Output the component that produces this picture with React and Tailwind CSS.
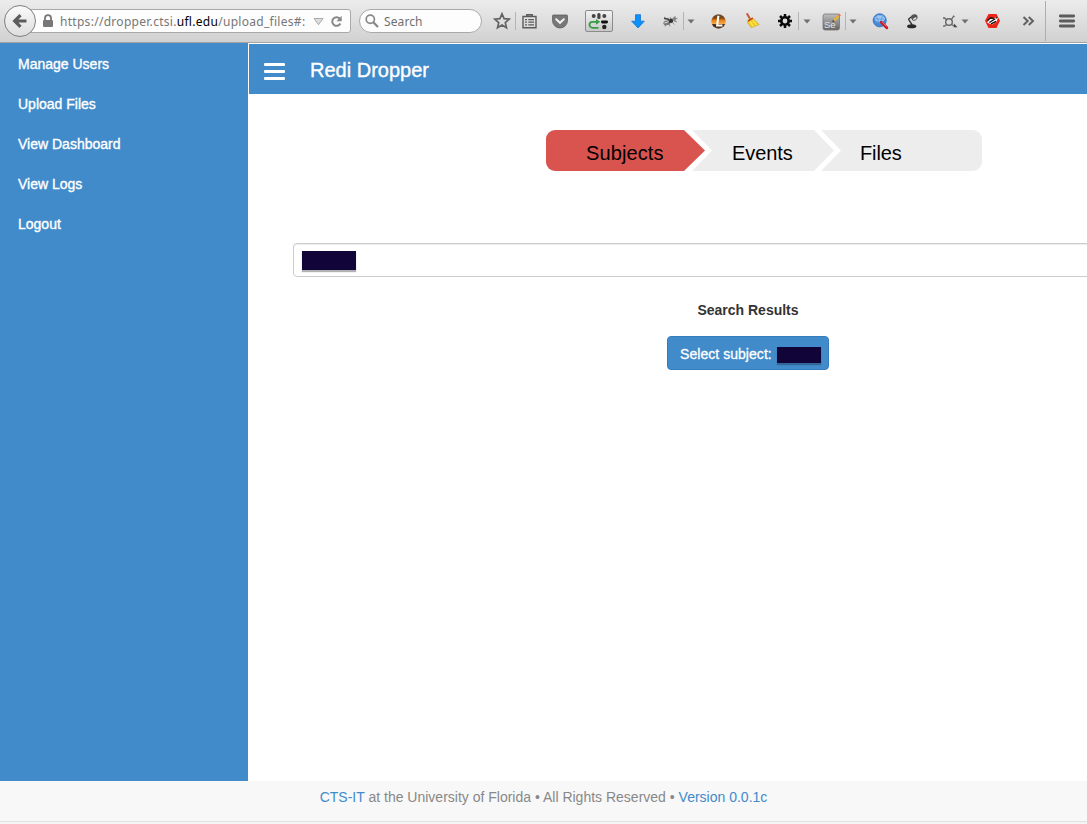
import React from "react";

const Sep = ({ className }) => <span className={`h-[18px] w-px shrink-0 bg-[#b4b4b4] ${className}`} />;

const Caret = ({ className }) => (
  <svg className={`h-[5px] w-2 shrink-0 ${className}`} viewBox="0 0 8 5">
    <path d="M0.5 .5h7L4 4.5z" fill="#707070" />
  </svg>
);

const Icon = ({ w = 16, h = 16, className = "", children }) => (
  <svg width={w} height={h} viewBox={`0 0 ${w} ${h}`} className={`shrink-0 ${className}`} fill="none">
    {children}
  </svg>
);

function AddressBar() {
  return (
    <div className="flex h-full shrink-0 items-center">
      <div className="z-10 ml-1 flex h-8 w-8 shrink-0 items-center justify-center rounded-full border border-[#808080] bg-linear-to-b from-[#fafafa] to-[#dedede]">
        <Icon w={16} h={16}>
          <path d="M8.5 2.2L2.7 8l5.8 5.8M3.5 8h11" stroke="#5c5c5c" strokeWidth="3.2" />
        </Icon>
      </div>
      <div className="-ml-2 flex h-6 w-[323px] shrink-0 items-center rounded-r-[3px] border border-[#a9a9a9] bg-[#fdfdfd]">
        <Icon w={12} h={14} className="ml-[13px]">
          <path d="M3 6.5V4.2a3 3 0 016 0v2.3" stroke="#777" strokeWidth="1.8" />
          <rect x="1" y="6" width="10" height="7" rx="1" fill="#777" />
        </Icon>
        <div className="ml-[6px] w-[246px] shrink-0 overflow-hidden whitespace-nowrap pt-0.5 font-['Noto_Sans',sans-serif] text-[12px] tracking-[0.29px] text-[#777]">
          https://dropper.ctsi.<span className="text-black">ufl.edu</span>/upload_files#:
        </div>
        <Icon w={11} h={9} className="ml-[7px]">
          <path d="M1 1.5h9L5.5 7.7z" fill="#ddd" stroke="#aaa" />
        </Icon>
        <Icon w={13} h={13} className="ml-[6px]">
          <path d="M9.8 3.7A4.3 4.3 0 1010.4 8.5" stroke="#888" strokeWidth="2" />
          <path d="M11.7 .8v5.4H6.4z" fill="#888" />
        </Icon>
      </div>
      <div className="ml-2 flex h-6 w-[123px] shrink-0 items-center rounded-full border border-[#a9a9a9] bg-[#fdfdfd]">
        <Icon w={14} h={14} className="ml-[5px]">
          <circle cx="5.3" cy="5.3" r="4.1" stroke="#888" strokeWidth="1.7" />
          <path d="M8.3 8.3l4.7 4.7" stroke="#888" strokeWidth="2.3" />
        </Icon>
        <span className="ml-[5px] pt-0.5 font-['Noto_Sans',sans-serif] text-[12px] tracking-[0.1px] text-[#707070]">Search</span>
      </div>
    </div>
  );
}

function Toolbar() {
  return (
    <div className="flex h-[43px] shrink-0 items-center overflow-hidden border-b border-[#a3a3a3] bg-linear-to-b from-[#ececec] to-[#d1d1d1]">
      <AddressBar />
      <Icon w={18} h={18} className="ml-[11px]">
        <path d="M9 1.8l2.1 4.8 5.2.5-4 3.5 1.2 5.2L9 13.1l-4.5 2.7 1.2-5.2-4-3.5 5.2-.5z" stroke="#636363" strokeWidth="1.7" />
      </Icon>
      <Sep className="ml-[4px]" />
      <Icon w={15} h={16} className="ml-[6px]">
        <path d="M1 3.5h13v11.2H1zM4.8 3V1.7h5.4V3" stroke="#5b5b5b" strokeWidth="1.4" />
        <path d="M3 6.7h2m1.3 0H12M3 9.2h2m1.3 0H12M3 11.8h2m1.3 0H12" stroke="#5b5b5b" strokeWidth="1.3" />
      </Icon>
      <Icon w={16} h={15} className="ml-[15px]">
        <path d="M1.5 1h13q1 0 1 1v4.5a7.5 7.5 0 01-15 0V2q0-1 1-1z" fill="#777" stroke="#555" strokeWidth=".7" />
        <path d="M4.2 5.2L8 8.8l3.8-3.6" stroke="#f2f2f2" strokeWidth="2" strokeLinecap="round" />
      </Icon>
      <div className="ml-[17px] flex h-[22px] w-7 shrink-0 items-center justify-center rounded-[2px] border border-[#8b8b8b] bg-linear-to-b from-[#f2f2f2] to-[#c8c8c8]">
        <Icon w={24} h={18}>
          <circle cx="6.7" cy="4" r="2" fill="#444" />
          <rect x="10.3" y="1" width="3.2" height="6" rx="1.5" fill="#444" />
          <circle cx="17.3" cy="4" r="2" fill="#444" />
          <path d="M11.5 15.8H5.5a3 3 0 010-6h4.5" stroke="#3a9a45" strokeWidth="1.8" />
          <path d="M9 6.9l4.2 2.9L9 12.7z" fill="#3a9a45" />
          <rect x="14" y="8.4" width="7" height="3" rx="1.4" fill="#111" />
          <circle cx="17.3" cy="15" r="2.2" fill="#222" />
        </Icon>
      </div>
      <Icon w={14} h={15} className="ml-[18px]">
        <path d="M4.5 .7h5v6.5h3.8L7 14 .7 7.2h3.8z" fill="#0a91ff" stroke="#1673cf" strokeWidth=".8" />
      </Icon>
      <Icon w={16} h={14} className="ml-[17px]">
        <ellipse cx="5" cy="8.8" rx="3.7" ry="2.4" fill="#777" transform="rotate(-15 5 8.8)" />
        <circle cx="9" cy="6.7" r="2.3" fill="#333" />
        <circle cx="12.3" cy="5" r="1.9" fill="#888" />
        <path d="M2 3l3 2 3 1M4 10l-1 2.5M7 9l1 3.5M10 8l2.5 2.5M12.5 4l.7-2M13.5 5l2-.8M9 5L8 3M12 7l3 1" stroke="#777" strokeWidth=".8" />
        <path d="M2 4.5l4 .5 1.5 1.5" stroke="#444" strokeWidth="1.4" />
        <path d="M2.5 9l4-1.3" stroke="#eee" strokeWidth=".9" />
      </Icon>
      <Sep className="ml-[5px]" />
      <Caret className="ml-[3px]" />
      <Icon w={15} h={15} className="ml-[16px]">
        <defs>
          <linearGradient id="orb" x1="0" y1="0" x2="0" y2="1">
            <stop stopColor="#6a5648" /><stop offset=".25" stopColor="#7a4411" /><stop offset=".42" stopColor="#e5811c" /><stop offset=".64" stopColor="#f4a748" /><stop offset=".72" stopColor="#40200b" /><stop offset="1" stopColor="#5d4330" />
          </linearGradient>
        </defs>
        <circle cx="7.5" cy="7.5" r="7.2" fill="url(#orb)" />
        <path d="M7.4 1.8L6.1 11.5h5.4" stroke="#fff" strokeWidth="2" />
      </Icon>
      <Icon w={16} h={16} className="ml-[19px]">
        <path d="M2.2 1l3.2 5.5" stroke="#c75b35" strokeWidth="2" strokeLinecap="round" />
        <path d="M2.3 9.2Q3 5.7 7.4 5l6.8 6.6-8 3z" fill="#f4cf21" stroke="#d0a215" strokeWidth=".7" />
        <path d="M3 8.2l4.8-3" stroke="#bd3a22" strokeWidth="1.5" />
        <path d="M5 8.5l3.2 5M8 7.2l4 5.1" stroke="#fff17a" strokeWidth=".9" />
      </Icon>
      <Icon w={14} h={14} className="ml-[17px]">
        <circle cx="7" cy="7" r="3.7" stroke="#0b0b0b" strokeWidth="2.6" />
        <path d="M7 0v3M7 11v3M0 7h3M11 7h3M2 2l2.2 2.2M9.8 9.8L12 12M2 12l2.2-2.2M9.8 4.2L12 2" stroke="#0b0b0b" strokeWidth="2.5" />
      </Icon>
      <Sep className="ml-[6px]" />
      <Caret className="ml-[4px]" />
      <Icon w={20} h={19} className="ml-[11px]">
        <defs>
          <linearGradient id="seBox" x1="0" y1="0" x2="0" y2="1"><stop stopColor="#bfbfbf" /><stop offset="1" stopColor="#646464" /></linearGradient>
        </defs>
        <rect x="1" y="2" width="16.5" height="16" rx="2" fill="url(#seBox)" stroke="#777" strokeWidth=".8" />
        <text x="2" y="16" fill="#e4e4e4" fontSize="9.5" fontFamily="Liberation Sans">Se</text>
        <path d="M12 8.5l4.5-4.7" stroke="#e2b23c" strokeWidth="2.8" />
        <path d="M16.5 3.8l1.5-1.5" stroke="#d07a65" strokeWidth="2.8" />
        <path d="M10.3 10.3l.6-2.5 1.9 1.7z" fill="#444" />
      </Icon>
      <Sep className="ml-[3px]" />
      <Caret className="ml-[3px]" />
      <Icon w={17} h={17} className="ml-[15px]">
        <circle cx="7.7" cy="7.3" r="6.6" fill="#4688d8" stroke="#3972be" strokeWidth=".8" />
        <path d="M2.5 4.7l3.2-2.5 5 .4 2.5 3-2 3-4.5.5-3.5-1.4z" fill="#9dc8f2" />
        <path d="M3 6h9M4.5 3.5l3 7M10.5 3l-3 8M3 9.3h8" stroke="#5b99dc" strokeWidth=".8" />
        <path d="M9.3 9.3l5.5 5.5" stroke="#c91927" strokeWidth="2.9" strokeLinecap="round" />
        <path d="M9.8 8.8l4.8 4.8" stroke="#f3766e" strokeWidth=".8" />
      </Icon>
      <Icon w={14} h={16} className="ml-[17px]">
        <path d="M2.4 6.2L7 2.5M2.4 6.2l3.8 5.8" stroke="#383838" strokeWidth="1.4" />
        <path d="M5 3.4Q6.4.6 9.3 1.3q2.8.7 2 3.5L7.2 7.2Q4.7 6 5 3.4z" fill="#555" />
        <ellipse cx="8.8" cy="5.6" rx="2.6" ry="1.4" fill="#ddd" stroke="#333" strokeWidth=".7" transform="rotate(-30 8.8 5.6)" />
        <ellipse cx="5.7" cy="13.3" rx="4.6" ry="2" fill="#292929" />
      </Icon>
      <Icon w={16} h={14} className="ml-[22px]">
        <circle cx="7" cy="8" r="3.3" stroke="#666" strokeWidth="1.4" />
        <path d="M4.5 5.7L2.8 4M9.3 5.7l2.2-3.2M4.5 10.5L2.8 12M9.5 10.5l2 1.2M1 4h2M1 12.2h2M11 1.8l1.5 1" stroke="#666" strokeWidth="1.3" />
        <path d="M12 9.6l3.5 3.6h-4z" fill="#444" />
      </Icon>
      <Caret className="ml-[3px]" />
      <Icon w={17} h={16} className="ml-[15px]">
        <path d="M4.5 1h8L16 7.7 12.5 15h-8L1 7.7z" fill="#ed2418" />
        <path d="M3 9.8l2.8-4 3.6.4 2.6-2.4 1.8 1.5-1.5 3.7-4 2.4z" fill="#fff" />
        <path d="M3.5 7.5l3.3-2.7 3 .5M5.3 9.5l6-3.8M7 10.9l5.1-2.6M11.7 4.2l1.2 1" stroke="#111" strokeWidth="1.3" />
      </Icon>
      <Icon w={13} h={12} className="ml-[21px]">
        <path d="M1.5 2L5.7 6l-4.2 4M6.8 2L11 6l-4.2 4" stroke="#626262" strokeWidth="2" />
      </Icon>
      <span className="ml-[10px] h-10 w-px shrink-0 bg-[#a9afb4]" />
      <Icon w={18} h={14} className="ml-[12px]">
        <path d="M2.3 2h13.4M2.3 7h13.4M2.3 12h13.4" stroke="#5c5c5c" strokeWidth="2.8" strokeLinecap="round" />
      </Icon>
    </div>
  );
}

const links = ["Manage Users", "Upload Files", "View Dashboard", "View Logs", "Logout"];

export default function App() {
  return (
    <div className="flex h-[824px] w-[1087px] flex-col overflow-hidden bg-white font-['Liberation_Sans',sans-serif] text-[14px] text-[#333]">
      <Toolbar />
      <div className="flex h-[738px] shrink-0">
        <nav className="flex w-[248px] shrink-0 flex-col bg-[#428bca] pl-[18px] pt-px text-white">
          {links.map((label) => (
            <a key={label} className="flex h-10 items-center [-webkit-text-stroke:0.35px_white]">{label}</a>
          ))}
        </nav>
        <main className="flex min-w-0 flex-1 flex-col overflow-hidden">
          <header className="ml-px mt-px flex h-[50px] shrink-0 items-center bg-[#428bca] pl-[15px] pt-1 text-white">
            <div className="flex w-[21px] flex-col gap-1">
              <span className="h-[3px] rounded-[1px] bg-white" />
              <span className="h-[3px] rounded-[1px] bg-white" />
              <span className="h-[3px] rounded-[1px] bg-white" />
            </div>
            <h1 className="-mt-0.5 ml-[25px] text-[20px] leading-6 [-webkit-text-stroke:0.35px_white]">Redi Dropper</h1>
          </header>
          <div className="ml-[298px] mt-9 flex h-[41px] shrink-0 text-[20px] leading-[46px] text-black">
            <div className="w-[159px] shrink-0 rounded-l-[9px] bg-[#d9534f] pl-10 tracking-[0.12px] [clip-path:polygon(0_0,138px_0,100%_50%,138px_100%,0_100%)]">Subjects</div>
            <div className="-ml-[13px] w-[142px] shrink-0 bg-[#ededed] pl-10 tracking-[-0.1px] [clip-path:polygon(0_0,122px_0,100%_50%,122px_100%,0_100%,20px_50%)]">Events</div>
            <div className="-ml-[13px] w-[161px] shrink-0 rounded-r-[9px] bg-[#ededed] pl-[39px] tracking-[-0.1px] [clip-path:polygon(0_0,100%_0,100%_100%,0_100%,20px_50%)]">Files</div>
          </div>
          <div className="ml-[45px] mt-[72px] flex h-[34px] w-[910px] shrink-0 items-start rounded-[4px] border border-[#ccc] pl-2 pt-[7px] shadow-[inset_0_1px_1px_rgba(0,0,0,0.075)]">
            <span className="h-[19px] w-[54px] bg-[#100438] shadow-[0_2px_1px_rgba(0,0,0,0.3)]" />
          </div>
          <section className="ml-[45px] flex w-[910px] shrink-0 flex-col items-center pt-[23px]">
            <h2 className="leading-5 font-bold">Search Results</h2>
            <button className="mt-4 flex h-[34px] w-[162px] items-center rounded-[4px] border border-[#357ebd] bg-[#428bca] pl-3 pt-[2px] text-white">
              <span className="whitespace-nowrap tracking-[0.05px] [-webkit-text-stroke:0.3px_white]">Select subject:</span>
              <span className="ml-[5px] mt-px h-4 w-11 bg-[#100438] shadow-[0_2px_1px_rgba(0,0,0,0.25)]" />
            </button>
          </section>
        </main>
      </div>
      <footer className="flex h-[41px] shrink-0 justify-center border-b border-[#e1e1e1] bg-[#f8f8f8] pt-[6px] leading-5 text-[#888]">
        <p className="whitespace-nowrap"><a className="text-[#428bca]">CTS-IT</a> at the University of Florida • All Rights Reserved • <a className="text-[#428bca]">Version 0.0.1c</a></p>
      </footer>
      <div className="flex-1 bg-[#f5f5f5]" />
    </div>
  );
}
